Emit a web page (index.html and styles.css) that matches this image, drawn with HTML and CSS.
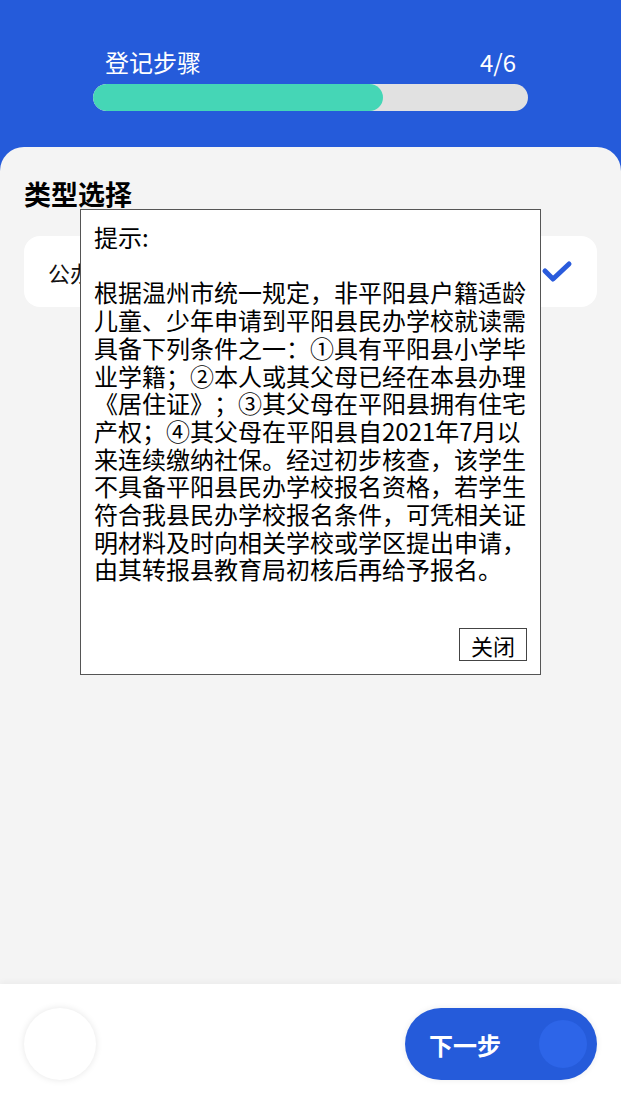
FILE: index.html
```html
<!DOCTYPE html>
<html>
<head>
    <title>登记步骤</title>
    <link rel="stylesheet" href="styles.css">
</head>
<body>
    <div class="app">
        <div class="header">
            <div class="step-row">
                <span class="step-title">登记步骤</span>
                <span class="step-count">4/6</span>
            </div>
            <div class="progress">
                <div class="progress-fill" style="width: 66.7%"></div>
            </div>
        </div>

        <div class="panel">
            <h2 class="section-title">类型选择</h2>
            <div class="option">
                <span class="option-label">公办学校</span>
                <svg class="check" width="32" height="24" viewBox="0 0 32 24">
                    <path d="M4 11 L12 19 L28 4" fill="none" stroke="#2a5bdc" stroke-width="5" stroke-linecap="round" stroke-linejoin="round"/>
                </svg>
            </div>
        </div>

        <div class="footer">
            <div class="back-btn"></div>
            <div class="next-btn">
                <span>下一步</span>
                <div class="next-dot"></div>
            </div>
        </div>

        <div class="dialog">
            <div class="dialog-text">提示:<br><br>根据温州市统一规定，非平阳县户籍适龄儿童、少年申请到平阳县民办学校就读需具备下列条件之一：①具有平阳县小学毕业学籍；②本人或其父母已经在本县办理《居住证》；③其父母在平阳县拥有住宅产权；④其父母在平阳县自2021年7月以来连续缴纳社保。经过初步核查，该学生不具备平阳县民办学校报名资格，若学生符合我县民办学校报名条件，可凭相关证明材料及时向相关学校或学区提出申请，由其转报县教育局初核后再给予报名。</div>
            <div class="dialog-actions">
                <button class="close-btn">关闭</button>
            </div>
        </div>
    </div>
</body>
</html>
```

FILE: styles.css
```css
body {
    margin: 0;
    font-family: "Noto Sans CJK SC", "Noto Sans", sans-serif;
    text-spacing-trim: space-all;
}
.app {
    position: relative;
    display: flex;
    flex-direction: column;
    height: 1104px;
    background: #255bda;
}
.header {
    height: 147px;
    padding: 0 93px;
    box-sizing: border-box;
    color: white;
}
.step-row {
    display: flex;
    justify-content: space-between;
    align-items: center;
    padding: 0 12px;
    height: 36px;
    margin-top: 43px;
    font-size: 24px;
}
.progress {
    margin-top: 5px;
    height: 27px;
    border-radius: 14px;
    background: #e1e1e1;
    overflow: hidden;
}
.progress-fill {
    height: 100%;
    border-radius: 14px;
    background: #45d6b6;
}
.panel {
    flex: 1;
    background: #f4f4f4;
    border-radius: 24px 24px 0 0;
    padding: 29px 24px 0;
}
.section-title {
    margin: 0;
    font-size: 27px;
    font-weight: bold;
    line-height: 36px;
    color: #000;
}
.option {
    display: flex;
    justify-content: space-between;
    align-items: center;
    margin-top: 24px;
    height: 71px;
    padding: 0 24px;
    background: white;
    border-radius: 16px;
}
.option-label {
    font-size: 22px;
    color: #111;
}
.footer {
    height: 120px;
    display: flex;
    justify-content: space-between;
    align-items: center;
    padding: 0 24px;
    background: white;
    box-shadow: 0 -2px 6px rgba(0, 0, 0, 0.04);
}
.back-btn {
    width: 72px;
    height: 72px;
    border-radius: 50%;
    background: white;
    box-shadow: 0 0 7px rgba(0, 0, 0, 0.1);
}
.next-btn {
    display: flex;
    justify-content: space-between;
    align-items: center;
    width: 192px;
    height: 72px;
    box-sizing: border-box;
    padding: 0 10px 0 24px;
    border-radius: 36px;
    background: #255bda;
    color: white;
    font-size: 24px;
    font-weight: bold;
    box-shadow: 0 0 6px rgba(0, 0, 0, 0.08);
}
.next-dot {
    width: 48px;
    height: 48px;
    border-radius: 50%;
    background: #2d65e8;
}
.dialog {
    position: absolute;
    left: 80px;
    top: 209px;
    width: 461px;
    height: 466px;
    box-sizing: border-box;
    display: flex;
    flex-direction: column;
    padding: 13px;
    background: white;
    border: 1px solid #555;
}
.dialog-text {
    font-size: 24px;
    line-height: 27.7px;
    color: #000;
}
.dialog-actions {
    margin-top: auto;
    display: flex;
    justify-content: flex-end;
}
.close-btn {
    height: 33px;
    padding: 0 11px;
    box-sizing: border-box;
    border: 1px solid #444;
    background: white;
    font-family: "Noto Sans CJK SC", sans-serif;
    font-size: 22px;
    line-height: 30px;
    color: #000;
}
```
